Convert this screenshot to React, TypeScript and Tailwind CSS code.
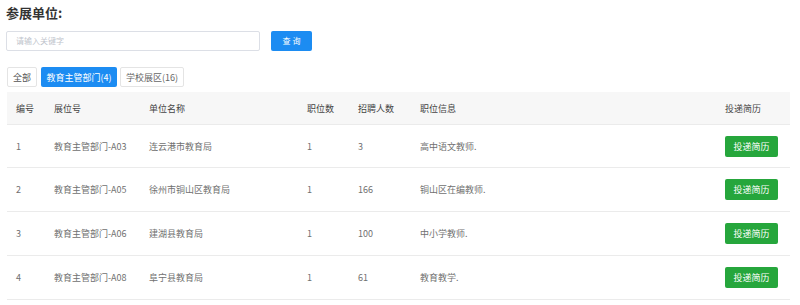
const FONT = 'font-["Noto_Sans_CJK_SC","Noto_Sans",sans-serif]'

interface Unit {
  no: number
  booth: string
  name: string
  posts: number
  hires: number
  info: string
}

const UNITS: Unit[] = [
  { no: 1, booth: '教育主管部门-A03', name: '连云港市教育局', posts: 1, hires: 3, info: '高中语文教师.' },
  { no: 2, booth: '教育主管部门-A05', name: '徐州市铜山区教育局', posts: 1, hires: 166, info: '铜山区在编教师.' },
  { no: 3, booth: '教育主管部门-A06', name: '建湖县教育局', posts: 1, hires: 100, info: '中小学教师.' },
  { no: 4, booth: '教育主管部门-A08', name: '阜宁县教育局', posts: 1, hires: 61, info: '教育教学.' },
]

const COLS = 'grid grid-cols-[47px_95px_158px_51px_62px_305px_65px] items-center'

export default function App() {
  return (
    <div className={`${FONT} bg-white w-[800px] h-[305px] overflow-hidden pl-[6px]`}>
      <div className="pt-[3px] text-[13px] leading-[20px] font-bold text-[#333]">参展单位:</div>

      <div className="mt-[8px] flex items-center">
        <div className="w-[254px] h-[20px] border border-[#dcdfe6] rounded-[2px] flex items-center pl-[9px] text-[8px] text-[#c0c4cc]">
          请输入关键字
        </div>
        <button className="ml-[11px] w-[41px] h-[20px] rounded-[2px] bg-[#1c8cf2] text-white text-[8px] leading-none">
          查&nbsp;询
        </button>
      </div>

      <div className="mt-[16px] ml-px flex items-center text-[9px] leading-none">
        <div className="w-[30px] h-[20px] flex items-center justify-center border border-[#e4e4e4] rounded-[2px] text-[#555]">全部</div>
        <div className="ml-[4px] w-[76px] h-[20px] flex items-center justify-center bg-[#1c8cf2] rounded-[2px] text-white">教育主管部门(4)</div>
        <div className="ml-[3px] w-[64px] h-[20px] flex items-center justify-center border border-[#e4e4e4] rounded-[2px] text-[#666]">学校展区(16)</div>
      </div>

      <div className="mt-[5px] ml-px w-[783px] text-[9px] leading-none">
        <div className={`${COLS} h-[33px] bg-[#f7f7f7] border-b border-[#ebebeb] text-[#444]`}>
          <div className="pl-[9px]">编号</div>
          <div>展位号</div>
          <div>单位名称</div>
          <div>职位数</div>
          <div>招聘人数</div>
          <div>职位信息</div>
          <div>投递简历</div>
        </div>
        {UNITS.map((u, i) => (
          <div
            key={u.no}
            className={`${COLS} ${i === 0 ? 'h-[43px]' : 'h-[44px]'} border-b border-[#ebebeb] text-[#707070]`}
          >
            <div className="pl-[9px]">{u.no}</div>
            <div>{u.booth}</div>
            <div>{u.name}</div>
            <div>{u.posts}</div>
            <div>{u.hires}</div>
            <div>{u.info}</div>
            <div>
              <button className="w-[53px] h-[21px] rounded-[2px] bg-[#26a63c] text-white text-[9px] leading-none">
                投递简历
              </button>
            </div>
          </div>
        ))}
      </div>
    </div>
  )
}
